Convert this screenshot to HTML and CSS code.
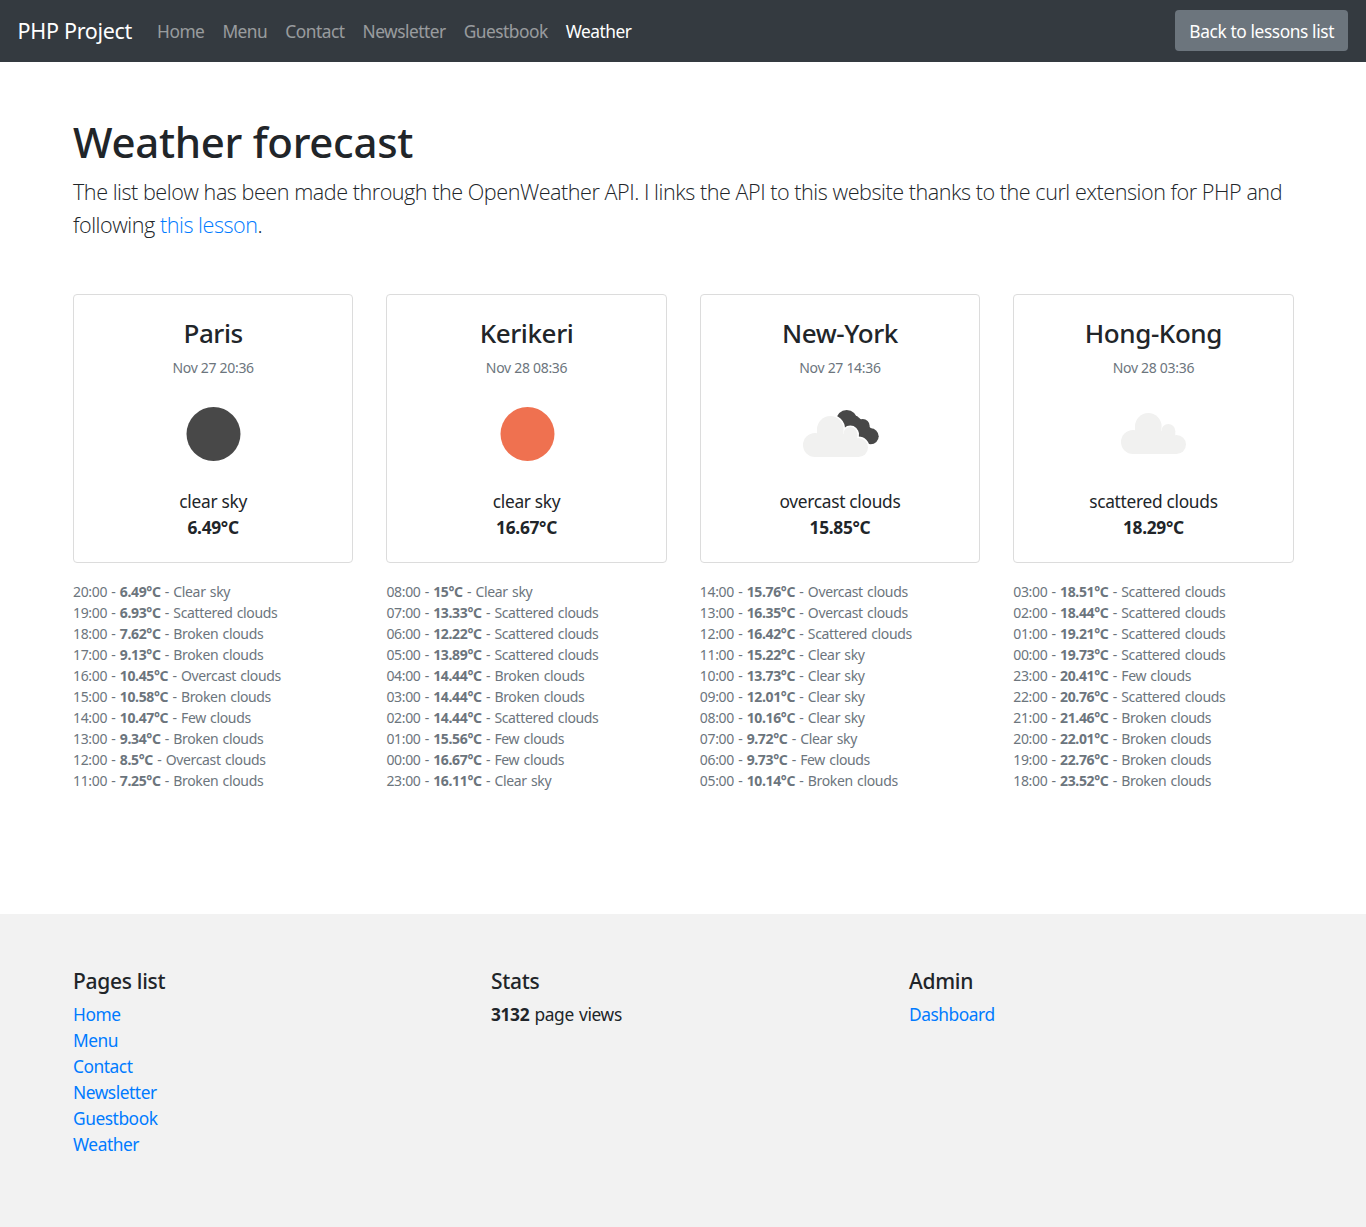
FILE: index.html
```html
<!DOCTYPE html>
<html lang="en">
<head>
<meta charset="utf-8">
<title>Weather forecast</title>
<link rel="stylesheet" href="styles.css">
</head>
<body>
<svg class="defs" width="0" height="0" aria-hidden="true">
  <defs>
    <g id="cloud">
      <circle cx="47.800" cy="32.300" r="13.300"/><circle cx="67.800" cy="37" r="7"/><circle cx="32.500" cy="48" r="12"/><circle cx="76" cy="50.500" r="9.500"/><rect x="32.500" y="44" width="43.500" height="16"/><rect x="34.500" y="32" width="26" height="14"/><rect x="60" y="37" width="14.800" height="9"/>
    </g>
  </defs>
</svg>
<nav class="navbar">
  <a class="brand" href="#">PHP Project</a>
  <ul class="nav-links">
    <li><a href="#">Home</a></li>
    <li><a href="#">Menu</a></li>
    <li><a href="#">Contact</a></li>
    <li><a href="#">Newsletter</a></li>
    <li><a href="#">Guestbook</a></li>
    <li><a class="active" href="#">Weather</a></li>
  </ul>
  <a class="btn" href="#">Back to lessons list</a>
</nav>
<main class="page">
  <h1>Weather forecast</h1>
  <p class="lead">The list below has been made through the OpenWeather API. I links the API to this website thanks to the curl extension for PHP and following <a href="#">this lesson</a>.</p>
  <section class="cities">
    <div class="city">
      <div class="card">
        <h2>Paris</h2><p class="date">Nov 27 20:36</p>
        <svg class="icon" viewBox="-0.5 0 106 80"><circle cx="53" cy="40" r="27" fill="#484848"/></svg>
        <p class="desc">clear sky</p><p class="temp">6.49°C</p>
      </div>
      <ul class="hours">
        <li>20:00 - <b>6.49°C</b> - Clear sky</li>
        <li>19:00 - <b>6.93°C</b> - Scattered clouds</li>
        <li>18:00 - <b>7.62°C</b> - Broken clouds</li>
        <li>17:00 - <b>9.13°C</b> - Broken clouds</li>
        <li>16:00 - <b>10.45°C</b> - Overcast clouds</li>
        <li>15:00 - <b>10.58°C</b> - Broken clouds</li>
        <li>14:00 - <b>10.47°C</b> - Few clouds</li>
        <li>13:00 - <b>9.34°C</b> - Broken clouds</li>
        <li>12:00 - <b>8.5°C</b> - Overcast clouds</li>
        <li>11:00 - <b>7.25°C</b> - Broken clouds</li>
      </ul>
    </div>
    <div class="city">
      <div class="card">
        <h2>Kerikeri</h2><p class="date">Nov 28 08:36</p>
        <svg class="icon" viewBox="-0.5 0 106 80"><circle cx="53" cy="40" r="27" fill="#ef7150"/></svg>
        <p class="desc">clear sky</p><p class="temp">16.67°C</p>
      </div>
      <ul class="hours">
        <li>08:00 - <b>15°C</b> - Clear sky</li>
        <li>07:00 - <b>13.33°C</b> - Scattered clouds</li>
        <li>06:00 - <b>12.22°C</b> - Scattered clouds</li>
        <li>05:00 - <b>13.89°C</b> - Scattered clouds</li>
        <li>04:00 - <b>14.44°C</b> - Broken clouds</li>
        <li>03:00 - <b>14.44°C</b> - Broken clouds</li>
        <li>02:00 - <b>14.44°C</b> - Scattered clouds</li>
        <li>01:00 - <b>15.56°C</b> - Few clouds</li>
        <li>00:00 - <b>16.67°C</b> - Few clouds</li>
        <li>23:00 - <b>16.11°C</b> - Clear sky</li>
      </ul>
    </div>
    <div class="city">
      <div class="card">
        <h2>New-York</h2><p class="date">Nov 27 14:36</p>
        <svg class="icon" viewBox="0 0 106 80">
          <g fill="#484848"><circle cx="59.700" cy="26.500" r="10.500"/><circle cx="75.700" cy="32" r="7"/><circle cx="83.700" cy="42.300" r="8"/><path d="M52 20 L70 22 L86 36 L82 50 L60 42 Z"/></g>
          <g transform="translate(-4.500 3)"><use class="cloud-halo" href="#cloud"/><use class="cloud-fill" href="#cloud"/></g>
        </svg>
        <p class="desc">overcast clouds</p><p class="temp">15.85°C</p>
      </div>
      <ul class="hours">
        <li>14:00 - <b>15.76°C</b> - Overcast clouds</li>
        <li>13:00 - <b>16.35°C</b> - Overcast clouds</li>
        <li>12:00 - <b>16.42°C</b> - Scattered clouds</li>
        <li>11:00 - <b>15.22°C</b> - Clear sky</li>
        <li>10:00 - <b>13.73°C</b> - Clear sky</li>
        <li>09:00 - <b>12.01°C</b> - Clear sky</li>
        <li>08:00 - <b>10.16°C</b> - Clear sky</li>
        <li>07:00 - <b>9.72°C</b> - Clear sky</li>
        <li>06:00 - <b>9.73°C</b> - Few clouds</li>
        <li>05:00 - <b>10.14°C</b> - Broken clouds</li>
      </ul>
    </div>
    <div class="city">
      <div class="card">
        <h2>Hong-Kong</h2><p class="date">Nov 28 03:36</p>
        <svg class="icon" viewBox="-0.5 0 106 80"><use class="cloud-fill" href="#cloud"/></svg>
        <p class="desc">scattered clouds</p><p class="temp">18.29°C</p>
      </div>
      <ul class="hours">
        <li>03:00 - <b>18.51°C</b> - Scattered clouds</li>
        <li>02:00 - <b>18.44°C</b> - Scattered clouds</li>
        <li>01:00 - <b>19.21°C</b> - Scattered clouds</li>
        <li>00:00 - <b>19.73°C</b> - Scattered clouds</li>
        <li>23:00 - <b>20.41°C</b> - Few clouds</li>
        <li>22:00 - <b>20.76°C</b> - Scattered clouds</li>
        <li>21:00 - <b>21.46°C</b> - Broken clouds</li>
        <li>20:00 - <b>22.01°C</b> - Broken clouds</li>
        <li>19:00 - <b>22.76°C</b> - Broken clouds</li>
        <li>18:00 - <b>23.52°C</b> - Broken clouds</li>
      </ul>
    </div>
  </section>
</main>
<footer class="footer">
  <div class="footer-col">
    <h3>Pages list</h3>
    <a href="#">Home</a><a href="#">Menu</a><a href="#">Contact</a><a href="#">Newsletter</a><a href="#">Guestbook</a><a href="#">Weather</a>
  </div>
  <div class="footer-col">
    <h3>Stats</h3>
    <p class="stat"><b>3132</b> page views</p>
  </div>
  <div class="footer-col">
    <h3>Admin</h3>
    <a href="#">Dashboard</a>
  </div>
</footer>
</body>
</html>
```
FILE: styles.css
```css
* { box-sizing: border-box; }
html, body { margin: 0; padding: 0; }
body {
  font-family: "Noto Sans", "Open Sans", sans-serif;
  font-size: 17.33px;
  line-height: 26px;
  color: #212529;
  background: #fff;
  letter-spacing: -0.3px;
}
a { color: #007bff; text-decoration: none; }
p, h1, h2, h3, ul { margin: 0; padding: 0; }
ul { list-style: none; }
.defs { position: absolute; }
.cloud-fill { fill: #f1f1f0; }
.cloud-halo { fill: #fff; stroke: #fff; stroke-width: 3px; }

.navbar {
  display: flex;
  align-items: center;
  height: 62px;
  padding: 0 18px 0 17.6px;
  background: #343a40;
}
.brand { color: #fff; font-size: 21.5px; margin-right: 25px; }
.nav-links { display: flex; gap: 18px; flex: 1; letter-spacing: -0.5px; }
.nav-links a { color: rgba(255,255,255,.5); }
.nav-links a.active { color: #fff; }
.btn {
  display: block;
  height: 41px;
  margin-bottom: 1px;
  padding: 8px 14px 7px;
  color: #fff;
  background: #6c757d;
  border-radius: 4px;
  letter-spacing: -0.4px;
}

.page { padding: 51px 72.5px 0 73px; height: 852px; }
h1 { font-size: 42px; line-height: 58px; font-weight: 500; letter-spacing: -0.3px; }
.lead { font-family: "Open Sans", "Noto Sans", sans-serif; font-size: 21.6px; line-height: 33px; font-weight: 300; margin-top: 4px; letter-spacing: -0.47px; }

.cities {
  display: grid;
  grid-template-columns: repeat(4, 1fr);
  column-gap: 33.2px;
  margin-top: 53px;
}
.card {
  height: 269px;
  padding-top: 22px;
  border: 1px solid #dcdcdc;
  border-radius: 4px;
  text-align: center;
}
.card h2 { font-size: 26px; line-height: 32px; font-weight: 500; letter-spacing: -0.4px; }
.date { font-size: 14px; line-height: 21px; color: #6c757d; margin-top: 8px; }
.icon { display: block; width: 106px; height: 80px; margin: 16px auto 0; }
.desc { margin-top: 14px; }
.temp { font-weight: 700; }

.hours { margin-top: 18px; font-size: 14px; line-height: 21px; color: #6c757d; letter-spacing: -0.35px; word-spacing: 1px; }

.footer {
  display: grid;
  grid-template-columns: repeat(3, 384.5px);
  column-gap: 33.5px;
  height: 313px;
  padding: 51px 73px 0;
  background: #f2f2f2;
}
.footer-col a { display: block; letter-spacing: -0.45px; }
.footer-col h3 { font-size: 21px; line-height: 32px; font-weight: 500; margin-bottom: 4px; }
.stat { letter-spacing: -0.35px; word-spacing: 1px; }
```
